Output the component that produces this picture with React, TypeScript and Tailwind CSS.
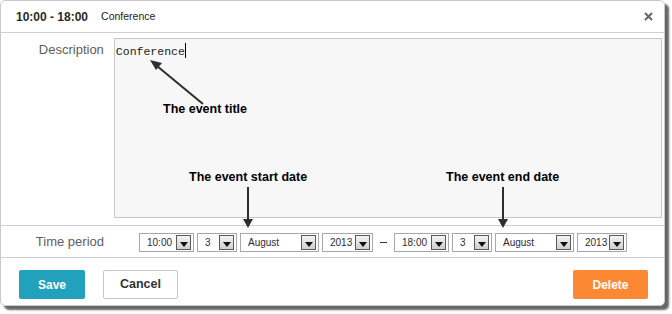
import React from 'react'

const sans = { fontFamily: '"Liberation Sans", Arial, sans-serif' }

function DropSelect({ value, width }: { value: string; width: string }) {
  return (
    <div className={`${width} h-[19px] flex items-center justify-between border border-[#a8a8a8] bg-white pl-[7px] pr-[2px]`}>
      <span className="text-[10px] text-[#2b2b3a] leading-none">{value}</span>
      {/* dropdown toggle */}
      <span className="w-[15px] h-[15px] flex items-center justify-center border border-[#5a5a5a] bg-gradient-to-b from-[#f4f4f4] to-[#cfcfcf]">
        <svg width="8" height="5" viewBox="0 0 8 5" className="mt-[3px]">
          <polygon points="0,0 8,0 4,5" fill="#111" />
        </svg>
      </span>
    </div>
  )
}

export default function App() {
  return (
    <div className="w-[672px] h-[314px] bg-white relative" style={sans}>
      <div className="w-[665px] h-[306px] border border-[#c9c9c9] rounded-[5px] bg-white flex flex-col shadow-[4px_4px_2px_rgba(0,0,0,0.6)]">
        {/* Header */}
        <div className="h-[32px] flex items-center border-b border-[#cfcfcf] pl-[15px] pr-[10px]">
          <span className="text-[12px] font-bold text-[#2a2a2a]">10:00 - 18:00</span>
          <span className="text-[10.5px] text-[#222] ml-[13px]">Conference</span>
          <svg width="9" height="9" viewBox="0 0 9 9" className="ml-auto mr-[1px]">
            <path d="M1 1 L8 8 M8 1 L1 8" stroke="#666" strokeWidth="2" />
          </svg>
        </div>

        {/* Description */}
        <div className="flex pt-[5px] pb-[7px] pr-[2px]">
          <div className="w-[103px] text-right text-[13px] text-[#5e5e5e] pt-[2px]">Description</div>
          <div className="ml-[10px] w-[549px] h-[180px] border border-[#c8c8c8] bg-[#f7f7f7] px-[1px] pt-[2px] leading-[18px]">
            <span className="text-[11.5px] text-[#222]" style={{ fontFamily: '"Liberation Mono", monospace' }}>
              Conference
            </span>
            <span className="inline-block w-[1px] h-[15px] bg-black align-[-3px]" />
          </div>
        </div>

        {/* Time period */}
        <div className="h-[32px] flex items-center border-t border-[#cfcfcf]">
          <div className="w-[103px] text-right text-[13px] text-[#5e5e5e]">Time period</div>
          <div className="ml-[35px] flex items-center gap-[3px] pt-[2px]">
            <DropSelect value="10:00" width="w-[55px]" />
            <DropSelect value="3" width="w-[40px]" />
            <DropSelect value="August" width="w-[79px]" />
            <DropSelect value="2013" width="w-[51px]" />
            <span className="w-[7px] h-[1px] bg-[#333] mx-[4px]" />
            <DropSelect value="18:00" width="w-[55px]" />
            <DropSelect value="3" width="w-[40px]" />
            <DropSelect value="August" width="w-[79px]" />
            <DropSelect value="2013" width="w-[50px]" />
          </div>
        </div>

        {/* Footer buttons */}
        <div className="flex items-start border-t border-[#cfcfcf] pt-[12px] pl-[18px] pr-[16px]">
          <button className="w-[66px] h-[29px] rounded-[2px] bg-[#22a1bc] text-white text-[12px] font-bold">Save</button>
          <button className="ml-[18px] w-[75px] h-[29px] rounded-[2px] border border-[#c6c6c6] bg-white text-[#333] text-[12.5px] font-bold">
            Cancel
          </button>
          <button className="ml-auto w-[75px] h-[29px] rounded-[2px] bg-[#fd8833] text-white text-[12px] font-bold">Delete</button>
        </div>
      </div>

      {/* Annotations */}
      <div className="absolute inset-0 pointer-events-none">
        <svg width="672" height="314" className="absolute inset-0">
          <line x1="203" y1="104" x2="157" y2="66" stroke="#2e2e2e" strokeWidth="2" />
          <polygon points="150,60 162,63 156,70" fill="#2e2e2e" />
          <line x1="248" y1="187" x2="248" y2="220" stroke="#2e2e2e" strokeWidth="2" />
          <polygon points="243,219 253,219 248,228" fill="#2e2e2e" />
          <line x1="503" y1="187" x2="503" y2="220" stroke="#2e2e2e" strokeWidth="2" />
          <polygon points="498,219 508,219 503,228" fill="#2e2e2e" />
        </svg>
        <div className="absolute left-[163px] top-[103px] text-[12.5px] font-bold text-black leading-none">The event title</div>
        <div className="absolute left-[189px] top-[171px] text-[12.5px] font-bold text-black leading-none">The event start date</div>
        <div className="absolute left-[446px] top-[171px] text-[12.5px] font-bold text-black leading-none">The event end date</div>
      </div>
    </div>
  )
}
